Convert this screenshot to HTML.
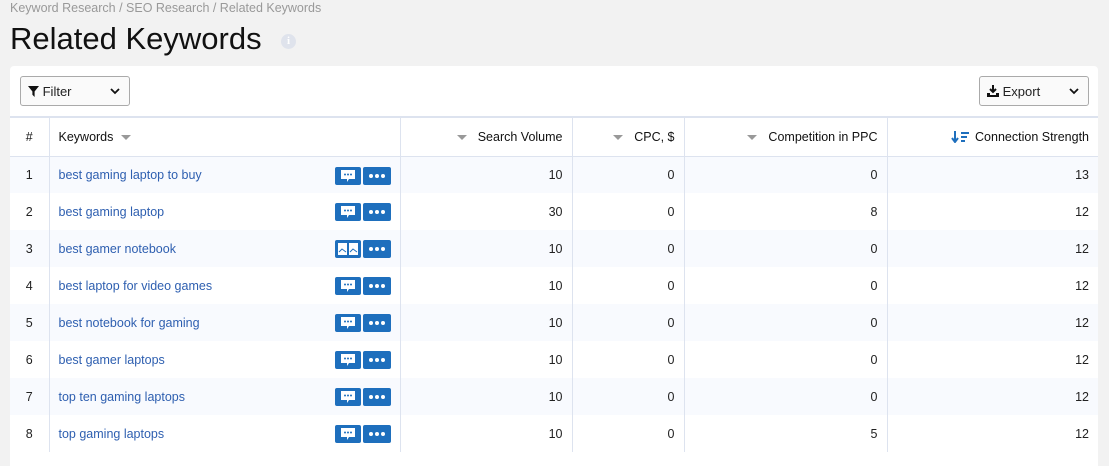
<!DOCTYPE html>
<html><head><meta charset="utf-8"><style>
*{box-sizing:border-box;margin:0;padding:0}
body{width:1109px;height:454px;overflow:hidden;background:#f2f2f2;font-family:"Liberation Sans",sans-serif;color:#222;position:relative}
.bc{position:absolute;left:10px;top:1px;font-size:12.5px;color:#999}
h1{position:absolute;left:10px;top:21px;font-size:31px;font-weight:normal;color:#111}
.info{position:absolute;left:281px;top:34px;width:15px;height:15px;border-radius:50%;background:#dfe3ec;color:#fff;font-size:11px;font-weight:bold;text-align:center;line-height:15px;font-family:"Liberation Serif",serif}
.card{position:absolute;left:10px;top:66px;width:1088px;height:400px;background:#fff;border-radius:4px 4px 0 0}
.btn{position:absolute;top:10px;height:30px;border:1px solid #aaa;border-radius:3px;background:#fafafa;font-size:13px;display:flex;align-items:center;padding-left:7px}
.btn .ch{position:absolute;right:9px;top:10px}
.bar{position:absolute;left:0;top:50px;width:1088px;height:2px;background:#dde3ef}
table{position:absolute;left:0;top:52px;border-collapse:collapse;font-size:12.5px;table-layout:fixed}
td,th{border-right:1px solid #dde3ef;height:37px;padding:0 9px;white-space:nowrap}
th{height:38px;font-weight:normal;text-align:right;border-bottom:1px solid #dde3ef;color:#111}
td{text-align:right}
tr.o td{background:#f8fafe}
td.n,th.n{text-align:center}
td.k,th.k{text-align:left;position:relative}
td.k a{color:#2e5fb0;text-decoration:none}
.tri{display:inline-block;width:0;height:0;border-left:5px solid transparent;border-right:5px solid transparent;border-top:5px solid #999;vertical-align:middle;margin-right:11px}
th.k .tri{margin:0 0 0 8px}
.acts{position:absolute;right:9px;top:10px;display:flex;gap:2px}
.acts span{width:26px;height:18px;background:#1e6fbd;border-radius:2px;display:flex;align-items:center;justify-content:center}
.acts span:last-child{width:28px}
</style></head><body>
<div class="bc">Keyword Research / SEO Research / Related Keywords</div>
<h1>Related Keywords</h1>
<div class="info">i</div>
<div class="card">
<div class="btn" style="left:10px;width:110px"><svg width="11" height="11" viewBox="0 0 10 10"><path d="M0 0h10L6 5v5L4 8V5z" fill="#111"/></svg>&nbsp;Filter<svg class="ch" width="10" height="8" viewBox="0 0 10 8"><path d="M1 2l4 4 4-4" stroke="#111" stroke-width="1.8" fill="none"/></svg></div>
<div class="btn" style="left:969px;width:110px"><svg width="12" height="12" viewBox="0 0 12 12"><path d="M6 0v7M3 4l3 3 3-3" stroke="#111" stroke-width="2" fill="none"/><path d="M0 8h3v2h6V8h3v4H0z" fill="#111"/></svg>&nbsp;Export<svg class="ch" width="10" height="8" viewBox="0 0 10 8"><path d="M1 2l4 4 4-4" stroke="#111" stroke-width="1.8" fill="none"/></svg></div>
<div class="bar"></div>
<table>
<colgroup><col style="width:39px"><col style="width:351px"><col style="width:172px"><col style="width:112px"><col style="width:203px"><col style="width:211px"></colgroup>
<tr><th class="n">#</th><th class="k">Keywords<span class="tri"></span></th><th><span class="tri"></span>Search Volume</th><th><span class="tri"></span>CPC, $</th><th><span class="tri"></span>Competition in PPC</th><th style="border-right:none"><svg width="20" height="12" viewBox="0 0 20 12" style="vertical-align:middle;margin-right:4px"><path d="M4 0v10M1 7l3 4 3-4" stroke="#1e6fbd" stroke-width="2" fill="none"/><path d="M10 2h8M10 6h6M10 10h4" stroke="#1e6fbd" stroke-width="2"/></svg>Connection Strength</th></tr>
<tr class="o"><td class="n">1</td><td class="k"><a>best gaming laptop to buy</a><div class="acts"><span><svg width="14" height="12" viewBox="0 0 14 12"><path d="M0 0h14v9H8l-2 3V9H0z" fill="#fff"/><circle cx="4" cy="4.5" r="1" fill="#1e6fbd"/><circle cx="7" cy="4.5" r="1" fill="#1e6fbd"/><circle cx="10" cy="4.5" r="1" fill="#1e6fbd"/></svg></span><span><svg width="16" height="4"><circle cx="2" cy="2" r="2" fill="#fff"/><circle cx="8" cy="2" r="2" fill="#fff"/><circle cx="14" cy="2" r="2" fill="#fff"/></svg></span></div></td><td>10</td><td>0</td><td>0</td><td style="border-right:none">13</td></tr>
<tr><td class="n">2</td><td class="k"><a>best gaming laptop</a><div class="acts"><span><svg width="14" height="12" viewBox="0 0 14 12"><path d="M0 0h14v9H8l-2 3V9H0z" fill="#fff"/><circle cx="4" cy="4.5" r="1" fill="#1e6fbd"/><circle cx="7" cy="4.5" r="1" fill="#1e6fbd"/><circle cx="10" cy="4.5" r="1" fill="#1e6fbd"/></svg></span><span><svg width="16" height="4"><circle cx="2" cy="2" r="2" fill="#fff"/><circle cx="8" cy="2" r="2" fill="#fff"/><circle cx="14" cy="2" r="2" fill="#fff"/></svg></span></div></td><td>30</td><td>0</td><td>8</td><td style="border-right:none">12</td></tr>
<tr class="o"><td class="n">3</td><td class="k"><a>best gamer notebook</a><div class="acts"><span><svg width="20" height="12" viewBox="0 0 20 12"><rect x="0" y="0" width="9" height="12" fill="#fff"/><rect x="11" y="0" width="9" height="12" fill="#fff"/><path d="M1 9l3-3 4 3M12 9l3-3 4 3" stroke="#1e6fbd" fill="none"/></svg></span><span><svg width="16" height="4"><circle cx="2" cy="2" r="2" fill="#fff"/><circle cx="8" cy="2" r="2" fill="#fff"/><circle cx="14" cy="2" r="2" fill="#fff"/></svg></span></div></td><td>10</td><td>0</td><td>0</td><td style="border-right:none">12</td></tr>
<tr><td class="n">4</td><td class="k"><a>best laptop for video games</a><div class="acts"><span><svg width="14" height="12" viewBox="0 0 14 12"><path d="M0 0h14v9H8l-2 3V9H0z" fill="#fff"/><circle cx="4" cy="4.5" r="1" fill="#1e6fbd"/><circle cx="7" cy="4.5" r="1" fill="#1e6fbd"/><circle cx="10" cy="4.5" r="1" fill="#1e6fbd"/></svg></span><span><svg width="16" height="4"><circle cx="2" cy="2" r="2" fill="#fff"/><circle cx="8" cy="2" r="2" fill="#fff"/><circle cx="14" cy="2" r="2" fill="#fff"/></svg></span></div></td><td>10</td><td>0</td><td>0</td><td style="border-right:none">12</td></tr>
<tr class="o"><td class="n">5</td><td class="k"><a>best notebook for gaming</a><div class="acts"><span><svg width="14" height="12" viewBox="0 0 14 12"><path d="M0 0h14v9H8l-2 3V9H0z" fill="#fff"/><circle cx="4" cy="4.5" r="1" fill="#1e6fbd"/><circle cx="7" cy="4.5" r="1" fill="#1e6fbd"/><circle cx="10" cy="4.5" r="1" fill="#1e6fbd"/></svg></span><span><svg width="16" height="4"><circle cx="2" cy="2" r="2" fill="#fff"/><circle cx="8" cy="2" r="2" fill="#fff"/><circle cx="14" cy="2" r="2" fill="#fff"/></svg></span></div></td><td>10</td><td>0</td><td>0</td><td style="border-right:none">12</td></tr>
<tr><td class="n">6</td><td class="k"><a>best gamer laptops</a><div class="acts"><span><svg width="14" height="12" viewBox="0 0 14 12"><path d="M0 0h14v9H8l-2 3V9H0z" fill="#fff"/><circle cx="4" cy="4.5" r="1" fill="#1e6fbd"/><circle cx="7" cy="4.5" r="1" fill="#1e6fbd"/><circle cx="10" cy="4.5" r="1" fill="#1e6fbd"/></svg></span><span><svg width="16" height="4"><circle cx="2" cy="2" r="2" fill="#fff"/><circle cx="8" cy="2" r="2" fill="#fff"/><circle cx="14" cy="2" r="2" fill="#fff"/></svg></span></div></td><td>10</td><td>0</td><td>0</td><td style="border-right:none">12</td></tr>
<tr class="o"><td class="n">7</td><td class="k"><a>top ten gaming laptops</a><div class="acts"><span><svg width="14" height="12" viewBox="0 0 14 12"><path d="M0 0h14v9H8l-2 3V9H0z" fill="#fff"/><circle cx="4" cy="4.5" r="1" fill="#1e6fbd"/><circle cx="7" cy="4.5" r="1" fill="#1e6fbd"/><circle cx="10" cy="4.5" r="1" fill="#1e6fbd"/></svg></span><span><svg width="16" height="4"><circle cx="2" cy="2" r="2" fill="#fff"/><circle cx="8" cy="2" r="2" fill="#fff"/><circle cx="14" cy="2" r="2" fill="#fff"/></svg></span></div></td><td>10</td><td>0</td><td>0</td><td style="border-right:none">12</td></tr>
<tr><td class="n">8</td><td class="k"><a>top gaming laptops</a><div class="acts"><span><svg width="14" height="12" viewBox="0 0 14 12"><path d="M0 0h14v9H8l-2 3V9H0z" fill="#fff"/><circle cx="4" cy="4.5" r="1" fill="#1e6fbd"/><circle cx="7" cy="4.5" r="1" fill="#1e6fbd"/><circle cx="10" cy="4.5" r="1" fill="#1e6fbd"/></svg></span><span><svg width="16" height="4"><circle cx="2" cy="2" r="2" fill="#fff"/><circle cx="8" cy="2" r="2" fill="#fff"/><circle cx="14" cy="2" r="2" fill="#fff"/></svg></span></div></td><td>10</td><td>0</td><td>5</td><td style="border-right:none">12</td></tr>
</table>
</div>
</body></html>
